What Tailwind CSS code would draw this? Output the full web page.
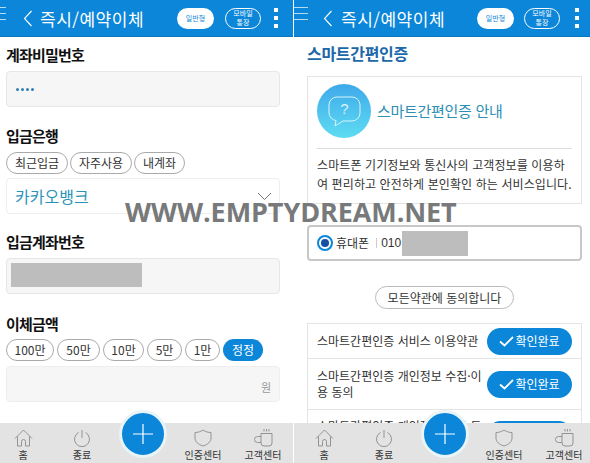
<!DOCTYPE html>
<html lang="ko">
<head>
  <meta charset="UTF-8">
  <title>즉시/예약이체</title>
  <script src="https://cdn.jsdelivr.net/npm/@tailwindcss/browser@4"></script>
</head>
<body class="bg-white w-[590px] h-[463px] overflow-hidden relative font-['Noto_Sans_CJK_KR','Liberation_Sans',sans-serif] text-[#222]">
  <div class="flex h-[463px]">

    <!-- Left screen -->
    <div class="relative w-[293px] h-[463px] overflow-hidden shrink-0">
      <div class="h-[37px] bg-[#0b86d9] border-b border-[#0a74bd] flex items-center text-white">
        <div class="w-[6px] h-[13px] mb-[9px] border-y border-white/70 shrink-0 flex items-center"><div class="w-full h-px bg-white/70"></div></div>
        <svg class="ml-[17px] shrink-0" width="10" height="17" viewBox="0 0 10 17" fill="none" stroke="#fff" stroke-width="1.1"><path d="M8.500 1 1.500 8.500l7 7.500"/></svg>
        <div class="ml-[7px] text-[17px] leading-none tracking-[0.5px] w-[109px] whitespace-nowrap">즉시/예약이체</div>
        <div class="ml-[28px] w-[37px] h-[21px] rounded-full bg-white text-[#0b86d9] text-[7px] flex items-center justify-center">일반형</div>
        <div class="ml-[11px] w-[36px] h-[21px] rounded-full border border-white text-[7px] leading-[9px] text-center flex items-center justify-center">모바일<br>통장</div>
        <div class="ml-[13px] flex flex-col gap-[4px]"><div class="w-[4px] h-[4px] bg-white"></div><div class="w-[4px] h-[4px] bg-white"></div><div class="w-[4px] h-[4px] bg-white"></div></div>
      </div>
      <div class="pl-[6px] w-[280px]">
        <div class="mt-[7px] h-[22px] leading-[22px] text-[15px] font-bold tracking-[-0.8px] text-[#111]">계좌비밀번호</div>
        <div class="mt-[5px] h-[36px] rounded-[4px] bg-[#f6f6f6] border border-[#e6e6e6] flex items-center pl-[9px] gap-[2px]">
          <span class="w-[3px] h-[3px] rounded-full bg-[#2f7fb5]"></span><span class="w-[3px] h-[3px] rounded-full bg-[#2f7fb5]"></span><span class="w-[3px] h-[3px] rounded-full bg-[#2f7fb5]"></span><span class="w-[3px] h-[3px] rounded-full bg-[#2f7fb5]"></span>
        </div>
        <div class="mt-[18px] h-[22px] leading-[22px] text-[15px] font-bold tracking-[-0.8px] text-[#111]">입금은행</div>
        <div class="mt-[5px] flex gap-[2px] text-[12px] text-[#333]">
          <div class="w-[62px] h-[22px] rounded-full border border-[#aaa] flex items-center justify-center">최근입금</div>
          <div class="w-[62px] h-[22px] rounded-full border border-[#aaa] flex items-center justify-center">자주사용</div>
          <div class="w-[51px] h-[22px] rounded-full border border-[#aaa] flex items-center justify-center">내계좌</div>
        </div>
        <div class="mt-[4px] h-[36px] rounded-[4px] bg-white border border-[#eee] flex items-center justify-between pl-[8px] pr-[7px]">
          <span class="text-[16px] text-[#2b93b8]">카카오뱅크</span>
          <svg width="15" height="9" viewBox="0 0 15 9" fill="none" stroke="#777"><path d="m1 1 6.500 6.500L14 1"/></svg>
        </div>
        <div class="mt-[17px] h-[22px] leading-[22px] text-[15px] font-bold tracking-[-0.8px] text-[#111]">입금계좌번호</div>
        <div class="mt-[5px] h-[36px] rounded-[4px] bg-[#f6f6f6] border border-[#e6e6e6] flex items-start pt-[4px] pl-[4px]">
          <div class="w-[131px] h-[24px] bg-[#bdbdbd]"></div>
        </div>
        <div class="mt-[19px] h-[22px] leading-[22px] text-[15px] font-bold tracking-[-0.8px] text-[#111]">이체금액</div>
        <div class="mt-[4px] flex gap-[3px] text-[12px] text-[#333]">
          <div class="w-[48px] h-[22px] rounded-full border border-[#aaa] flex items-center justify-center">100만</div>
          <div class="w-[43px] h-[22px] rounded-full border border-[#aaa] flex items-center justify-center">50만</div>
          <div class="w-[41px] h-[22px] rounded-full border border-[#aaa] flex items-center justify-center">10만</div>
          <div class="w-[35px] h-[22px] rounded-full border border-[#aaa] flex items-center justify-center">5만</div>
          <div class="w-[35px] h-[22px] rounded-full border border-[#aaa] flex items-center justify-center">1만</div>
          <div class="w-[40px] h-[22px] rounded-full bg-[#0b86d9] text-white flex items-center justify-center">정정</div>
        </div>
        <div class="mt-[5px] h-[36px] rounded-[4px] bg-[#f6f6f6] border border-[#eee] flex items-end justify-end pr-[8px] pb-[6px]">
          <span class="text-[11px] text-[#999]">원</span>
        </div>
      </div>

      <!-- Bottom nav -->
      <div class="absolute left-0 right-0 bottom-0 h-[40px] bg-[#e3e3e3] text-[10px] text-[#333]">
        <div class="absolute left-[119px] -top-[13px] w-[48px] h-[48px] rounded-full bg-[#0b86d9] border-[3px] border-[#e8f4f8] flex items-center justify-center">
          <svg width="22" height="22" viewBox="0 0 22 22" stroke="#fff" stroke-width="1.200"><path d="M11 1v20M1 11h20"/></svg>
        </div>
        <div class="absolute left-0 top-[6px] w-[46px] flex flex-col items-center">
          <svg width="19" height="18" viewBox="0 0 19 18" fill="none" stroke="#8a8a8a" stroke-width="0.900"><path d="M1 9.500 9.500 1 18 9.500M3.500 7.500V17h4v-4.500a2 2 0 0 1 4 0V17h4V7.500"/></svg>
          <span class="leading-[12px] mt-[2px]">홈</span>
        </div>
        <div class="absolute left-[59px] top-[6px] w-[46px] flex flex-col items-center">
          <svg width="18" height="18" viewBox="0 0 18 18" fill="none" stroke="#8a8a8a" stroke-width="0.900"><path d="M9 1v8M5.500 3.500a7.500 7.500 0 1 0 7 0"/></svg>
          <span class="leading-[12px] mt-[2px]">종료</span>
        </div>
        <div class="absolute left-[180px] top-[6px] w-[46px] flex flex-col items-center">
          <svg width="18" height="18" viewBox="0 0 18 18" fill="none" stroke="#8a8a8a" stroke-width="0.900"><path d="M9 1c2 1.500 5 2.500 8 2.500V9c0 3.500-3 6.500-8 8-5-1.500-8-4.500-8-8V3.500c3 0 6-1 8-2.500z"/></svg>
          <span class="leading-[12px] mt-[2px] whitespace-nowrap">인증센터</span>
        </div>
        <div class="absolute left-[240px] top-[5px] w-[46px] flex flex-col items-center">
          <svg width="19" height="19" viewBox="0 0 19 19" fill="none" stroke="#8a8a8a" stroke-width="0.900"><path d="M7 5.500h11V15a3 3 0 0 1-3 3h-5a3 3 0 0 1-3-3zM7 8.500H3.500a2.500 2.500 0 0 0 0 6H7M10 1v2.500M12.500 1v2.500M15 1v2.500"/></svg>
          <span class="leading-[12px] mt-[2px] whitespace-nowrap">고객센터</span>
        </div>
      </div>
    </div>

    <div class="w-px bg-white shrink-0"></div>

    <!-- Right screen -->
    <div class="relative w-[296px] h-[463px] overflow-hidden shrink-0">
      <div class="h-[37px] bg-[#0b86d9] border-b border-[#0a74bd] flex items-center text-white">
        <div class="w-[14px] h-[13px] mb-[9px] border-y border-white/70 shrink-0 flex items-center"><div class="w-full h-px bg-white/70"></div></div>
        <svg class="ml-[15px] shrink-0" width="10" height="17" viewBox="0 0 10 17" fill="none" stroke="#fff" stroke-width="1.100"><path d="M8.500 1 1.500 8.500l7 7.500"/></svg>
        <div class="ml-[8px] text-[17px] leading-none tracking-[0.5px] w-[109px] whitespace-nowrap">즉시/예약이체</div>
        <div class="ml-[27px] w-[37px] h-[21px] rounded-full bg-white text-[#0b86d9] text-[7px] flex items-center justify-center">일반형</div>
        <div class="ml-[10px] w-[36px] h-[21px] rounded-full border border-white text-[7px] leading-[9px] text-center flex items-center justify-center">모바일<br>통장</div>
        <div class="ml-[15px] flex flex-col gap-[4px]"><div class="w-[4px] h-[4px] bg-white"></div><div class="w-[4px] h-[4px] bg-white"></div><div class="w-[4px] h-[4px] bg-white"></div></div>
      </div>
      <div class="pl-[13px] w-[288px]">
        <div class="mt-[5px] h-[22px] leading-[22px] text-[16px] font-bold tracking-[-0.3px] text-[#1c68a8]">스마트간편인증</div>
        <div class="mt-[12px] border border-[#e4e4e4] h-[128px] px-[9px] pt-[7px]">
          <div class="flex items-center gap-[6px]">
            <div class="w-[54px] h-[54px] rounded-full bg-gradient-to-b from-[#3fa9ea] to-[#5fdcf2] flex items-center justify-center">
              <svg width="33" height="31" viewBox="0 0 33 31" fill="none" stroke="#d8f3fb"><path d="M9 1h15a8 8 0 0 1 8 8v8a8 8 0 0 1-8 8H15l-8 5 1-5.500A8 8 0 0 1 1 17V9a8 8 0 0 1 8-8z"/><text x="16.500" y="18" text-anchor="middle" font-size="15" fill="#d8f3fb" stroke="none" font-family="Liberation Sans">?</text></svg>
            </div>
            <div class="text-[15px] tracking-[-0.3px] text-[#2b8fb5]">스마트간편인증 안내</div>
          </div>
          <div class="mt-[10px] h-px bg-[#ddd]"></div>
          <p class="mt-[6px] text-[12px] leading-[19px] tracking-[0.1px] text-[#333] whitespace-nowrap">스마트폰 기기정보와 통신사의 고객정보를 이용하<br>여 편리하고 안전하게 본인확인 하는 서비스입니다.</p>
        </div>
        <div class="mt-[21px] h-[36px] border-[2px] border-[#c8c8c8] rounded-[4px] flex items-center pl-[8px]">
          <div class="w-[16px] h-[16px] rounded-full border-[2px] border-[#0b86d9] flex items-center justify-center"><div class="w-[8px] h-[8px] rounded-full bg-[#174ea6]"></div></div>
          <span class="ml-[3px] text-[12px] text-[#333]">휴대폰</span>
          <span class="ml-[7px] h-[10px] w-px bg-[#ccc]"></span>
          <span class="ml-[4px] text-[12px] text-[#333] font-['Liberation_Sans']">010</span>
          <div class="ml-[1px] w-[66px] h-[25px] bg-[#bdbdbd]"></div>
        </div>
        <div class="mt-[25px] flex justify-center">
          <div class="w-[139px] h-[23px] rounded-full border border-[#bbb] text-[12px] text-[#333] flex items-center justify-center">모든약관에 동의합니다</div>
        </div>
        <div class="mt-[14px] border-x border-t border-[#e4e4e4]">
          <div class="h-[35px] border-b border-[#e4e4e4] flex items-center pl-[9px] pr-[9px] justify-between">
            <span class="text-[12px] tracking-[0px] text-[#333] whitespace-nowrap">스마트간편인증 서비스 이용약관</span>
            <div class="w-[85px] h-[27px] rounded-full bg-[#0b86d9] text-white text-[12px] flex items-center justify-center gap-[1px]">
              <svg width="15" height="11" viewBox="0 0 15 11" fill="none" stroke="#fff" stroke-width="1.800"><path d="m1 5.500 4.500 4L14 1"/></svg>확인완료
            </div>
          </div>
          <div class="h-[51px] border-b border-[#e4e4e4] flex items-center pl-[9px] pr-[9px] justify-between">
            <span class="text-[12px] leading-[16px] tracking-[0px] text-[#333] w-[168px]">스마트간편인증 개인정보 수집·이용 동의</span>
            <div class="w-[85px] h-[27px] rounded-full bg-[#0b86d9] text-white text-[12px] flex items-center justify-center gap-[1px]">
              <svg width="15" height="11" viewBox="0 0 15 11" fill="none" stroke="#fff" stroke-width="1.800"><path d="m1 5.500 4.500 4L14 1"/></svg>확인완료
            </div>
          </div>
          <div class="h-[51px] flex items-start pl-[9px] pr-[9px] justify-between pt-[8px]">
            <span class="text-[12px] tracking-[0px] text-[#333] whitespace-nowrap leading-[16px]">스마트간편인증 개인정보 제공 동</span>
            <div class="w-[85px] h-[27px] mt-[3px] rounded-full bg-[#0b86d9]"></div>
          </div>
        </div>
      </div>

      <!-- Bottom nav -->
      <div class="absolute left-0 right-0 bottom-0 h-[40px] bg-[#e3e3e3] text-[10px] text-[#333]">
        <div class="absolute left-[127px] -top-[13px] w-[48px] h-[48px] rounded-full bg-[#0b86d9] border-[3px] border-[#e8f4f8] flex items-center justify-center">
          <svg width="22" height="22" viewBox="0 0 22 22" stroke="#fff" stroke-width="1.200"><path d="M11 1v20M1 11h20"/></svg>
        </div>
        <div class="absolute left-[7px] top-[6px] w-[46px] flex flex-col items-center">
          <svg width="19" height="18" viewBox="0 0 19 18" fill="none" stroke="#8a8a8a" stroke-width="0.900"><path d="M1 9.500 9.500 1 18 9.500M3.500 7.500V17h4v-4.500a2 2 0 0 1 4 0V17h4V7.500"/></svg>
          <span class="leading-[12px] mt-[2px]">홈</span>
        </div>
        <div class="absolute left-[67px] top-[6px] w-[46px] flex flex-col items-center">
          <svg width="18" height="18" viewBox="0 0 18 18" fill="none" stroke="#8a8a8a" stroke-width="0.900"><path d="M9 1v8M5.500 3.500a7.500 7.500 0 1 0 7 0"/></svg>
          <span class="leading-[12px] mt-[2px]">종료</span>
        </div>
        <div class="absolute left-[187px] top-[6px] w-[46px] flex flex-col items-center">
          <svg width="18" height="18" viewBox="0 0 18 18" fill="none" stroke="#8a8a8a" stroke-width="0.900"><path d="M9 1c2 1.500 5 2.500 8 2.500V9c0 3.500-3 6.500-8 8-5-1.500-8-4.500-8-8V3.500c3 0 6-1 8-2.500z"/></svg>
          <span class="leading-[12px] mt-[2px] whitespace-nowrap">인증센터</span>
        </div>
        <div class="absolute left-[247px] top-[5px] w-[46px] flex flex-col items-center">
          <svg width="19" height="19" viewBox="0 0 19 19" fill="none" stroke="#8a8a8a" stroke-width="0.900"><path d="M7 5.500h11V15a3 3 0 0 1-3 3h-5a3 3 0 0 1-3-3zM7 8.500H3.500a2.500 2.500 0 0 0 0 6H7M10 1v2.500M12.500 1v2.500M15 1v2.500"/></svg>
          <span class="leading-[12px] mt-[2px] whitespace-nowrap">고객센터</span>
        </div>
      </div>
    </div>
  </div>

  <!-- Watermark -->
  <div class="absolute left-[125px] top-[193px] text-[27px] leading-[38px] font-bold tracking-[-0.1px] text-[#77797b] whitespace-nowrap font-['Open_Sans',sans-serif]">WWW.EMPTYDREAM.NET</div>
</body>
</html>
